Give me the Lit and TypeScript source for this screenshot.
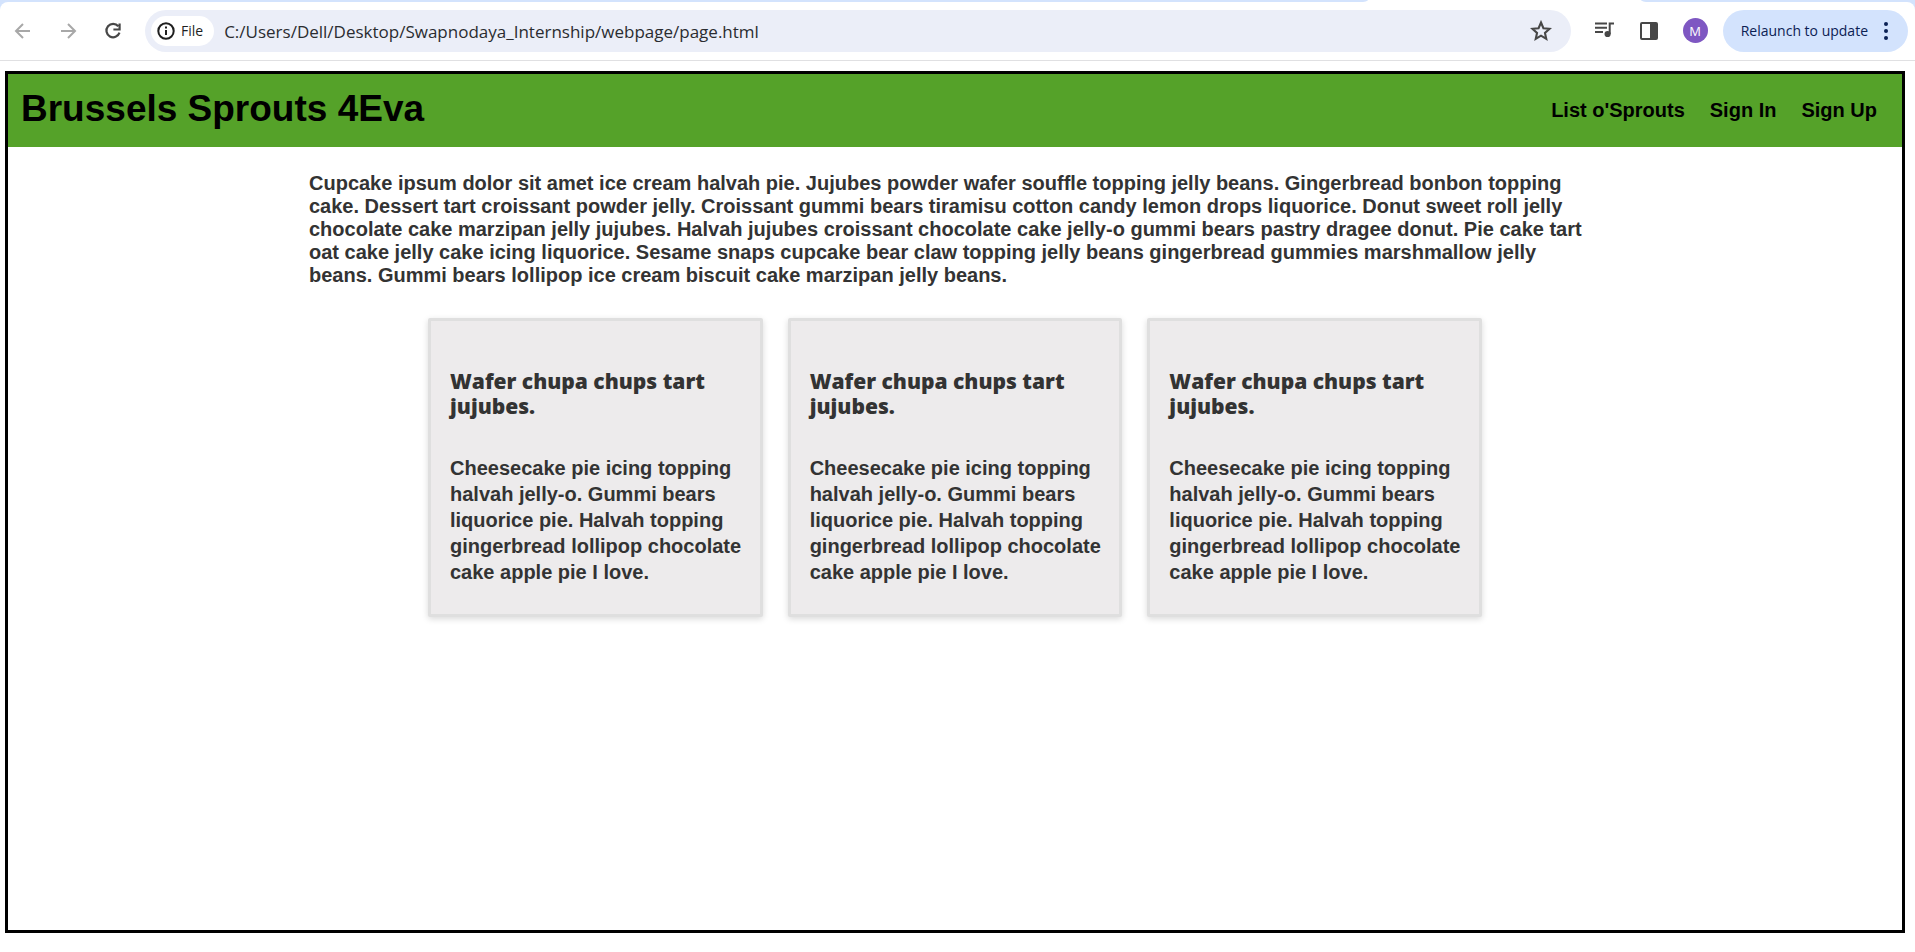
import { LitElement, html, css } from "lit";
import { customElement, property } from "lit/decorators.js";

const INTRO = "Cupcake ipsum dolor sit amet ice cream halvah pie. Jujubes powder wafer souffle topping jelly beans. Gingerbread bonbon topping cake. Dessert tart croissant powder jelly. Croissant gummi bears tiramisu cotton candy lemon drops liquorice. Donut sweet roll jelly chocolate cake marzipan jelly jujubes. Halvah jujubes croissant chocolate cake jelly-o gummi bears pastry dragee donut. Pie cake tart oat cake jelly cake icing liquorice. Sesame snaps cupcake bear claw topping jelly beans gingerbread gummies marshmallow jelly beans. Gummi bears lollipop ice cream biscuit cake marzipan jelly beans.";

const CARD = {
  heading: "Wafer chupa chups tart jujubes.",
  body: "Cheesecake pie icing topping halvah jelly-o. Gummi bears liquorice pie. Halvah topping gingerbread lollipop chocolate cake apple pie I love.",
};

@customElement("browser-bar")
export class BrowserBar extends LitElement {
  static styles = css`
    :host { display: block; font-family: "Open Sans", "Noto Sans", sans-serif; background: #fff; }
    button { border: 0; padding: 0; background: none; font: inherit; color: inherit; display: flex; align-items: center; }
    svg { display: block; }
    .tabs { height: 2px; display: flex; background: #fff; }
    .before { flex: 1368; background: #d3e3fd; border-bottom-right-radius: 8px 2px; }
    .active { flex: 273; }
    .after { flex: 274; background: #d3e3fd; border-bottom-left-radius: 8px 2px; }
    .surface { background: #d3e3fd; }
    .bar { display: flex; align-items: center; box-sizing: border-box; height: 59px; padding: 0 7px 1px 13px; border-bottom: 1px solid #e0e0e2; border-radius: 8px 8px 0 0; background: #fff; }
    .nav { display: flex; gap: 25px; color: #474747; margin-right: 22px; }
    .nav button:disabled { color: #a8a8a8; }
    .omnibox { flex: 1; display: flex; align-items: center; height: 42px; box-sizing: border-box; border-radius: 21px; background: #ebeef8; padding: 0 19px 0 6px; }
    .chip { height: 30px; padding: 0 11px 0 6px; border-radius: 15px; background: #fff; gap: 6px; font-size: 14px; color: #1f1f1f; }
    .url { flex: 1; min-width: 0; border: 0; outline: 0; background: none; padding: 1px 0 0; margin: 0 10px; font: 17px "Open Sans", "Noto Sans", sans-serif; color: #2a2c30; }
    .star { color: #474747; }
    .tools { display: flex; align-items: center; gap: 24px; margin: 0 15px 0 23px; color: #474747; }
    .avatar { width: 25px; height: 25px; border-radius: 50%; background: #7e57c2; color: #fff; justify-content: center; font-size: 13px; }
    .update { height: 42px; border-radius: 21px; padding: 0 12px 0 18px; background: #d3e3fd; color: #0b2154; font-size: 14px; gap: 8px; }
  `;
  render() {
    return html`
      <div class="tabs"><span class="before"></span><span class="active"></span><span class="after"></span></div>
      <div class="surface"><div class="bar">
        <div class="nav">
          <button disabled aria-label="Back"><svg width="20" height="20" viewBox="0 0 20 20" fill="none" stroke="currentColor" stroke-width="2"><path d="M17 10H3.5M10 3L3 10l7 7"/></svg></button>
          <button disabled aria-label="Forward"><svg width="20" height="20" viewBox="0 0 20 20" fill="none" stroke="currentColor" stroke-width="2"><path d="M3 10h13.5M10 3l7 7-7 7"/></svg></button>
          <button aria-label="Reload"><svg width="20" height="20" viewBox="0 0 20 20" fill="none" stroke="currentColor" stroke-width="2.2"><path d="M15.3 5.3A6.7 6.7 0 1 0 16.5 11.7M16.6 2.5v6h-6.2"/></svg></button>
        </div>
        <div class="omnibox">
          <button class="chip"><svg width="18" height="18" viewBox="0 0 18 18" fill="none" stroke="currentColor" stroke-width="2"><circle cx="9" cy="9" r="7.7"/><path d="M9 8v5M9 4.6v2"/></svg>File</button>
          <input class="url" aria-label="Address" value="C:/Users/Dell/Desktop/Swapnodaya_Internship/webpage/page.html">
          <button class="star" aria-label="Bookmark"><svg width="22" height="22" viewBox="0 0 20 20" fill="none" stroke="currentColor" stroke-width="1.9"><path d="M10 2.3l2.2 5.2 5.6.5-4.2 3.7 1.2 5.5-4.8-2.9-4.8 2.9 1.2-5.500L2.200 8l5.600-.5z"/></svg></button>
        </div>
        <div class="tools">
          <button aria-label="Media"><svg width="21" height="18" viewBox="0 0 21 18" fill="none" stroke="currentColor" stroke-width="2"><path d="M1 1.500h12M1 5.700h12M1 9.900h8M20 1.500h-4.300v10.500"/><circle cx="13.600" cy="12" r="3.100" fill="currentColor" stroke="none"/></svg></button>
          <button aria-label="Side panel"><svg width="20" height="20" viewBox="0 0 20 20"><rect x="2" y="2" width="16" height="16" rx="1" fill="none" stroke="currentColor" stroke-width="2"/><path d="M11 2h7v16h-7z" fill="currentColor"/></svg></button>
          <button class="avatar" aria-label="Profile">M</button>
        </div>
        <button class="update">Relaunch to update<svg width="20" height="20" viewBox="0 0 20 20" fill="currentColor"><circle cx="10" cy="3" r="2"/><circle cx="10" cy="10" r="2"/><circle cx="10" cy="17" r="2"/></svg></button>
      </div></div>`;
  }
}

@customElement("sprout-card")
export class SproutCard extends LitElement {
  @property() heading = "";
  @property() body = "";
  static styles = css`
    :host { display: block; box-sizing: border-box; border: 3px solid #dfdfdf; border-radius: 2px; background: #edebec; padding: 48px 18px 29px 19px; box-shadow: 0 2px 6px rgba(0, 0, 0, 0.15); color: #333; }
    h2 { margin: 0 0 36px; font: 800 21px/25px "Open Sans", "Noto Sans", sans-serif; }
    p { margin: 0; font: bold 20px/26px "Liberation Sans", Arial, sans-serif; }
  `;
  render() {
    return html`<h2>${this.heading}</h2><p>${this.body}</p>`;
  }
}

@customElement("app-root")
export class AppRoot extends LitElement {
  static styles = css`
    :host { display: flex; flex-direction: column; min-height: 100vh; box-sizing: border-box; padding-bottom: 19px; background: #fff; font-family: "Liberation Sans", Arial, sans-serif; }
    .page { flex: 1; margin: 10px 10px 0 5px; border: 3px solid #000; }
    header { display: flex; align-items: center; justify-content: space-between; padding: 13px 25px 17px 13px; background: #55a229; }
    h1 { margin: 0; font-size: 37px; line-height: 43px; color: #000; }
    nav { display: flex; gap: 25px; padding-top: 4px; }
    nav a { font-size: 20px; line-height: 23px; font-weight: bold; color: #000; text-decoration: none; }
    .intro { max-width: 1292px; margin: 25px auto 0; font-size: 20px; line-height: 23px; font-weight: bold; color: #333; }
    .cards { display: grid; grid-template-columns: repeat(3, 1fr); gap: 25px; max-width: 1054px; margin: 31px auto 0; }
  `;
  render() {
    return html`
      <browser-bar></browser-bar>
      <div class="page">
        <header>
          <h1>Brussels Sprouts 4Eva</h1>
          <nav><a href="#list">List o'Sprouts</a><a href="#in">Sign In</a><a href="#up">Sign Up</a></nav>
        </header>
        <main>
          <p class="intro">${INTRO}</p>
          <div class="cards">${[CARD, CARD, CARD].map((c) => html`<sprout-card .heading=${c.heading} .body=${c.body}></sprout-card>`)}</div>
        </main>
      </div>`;
  }
}
